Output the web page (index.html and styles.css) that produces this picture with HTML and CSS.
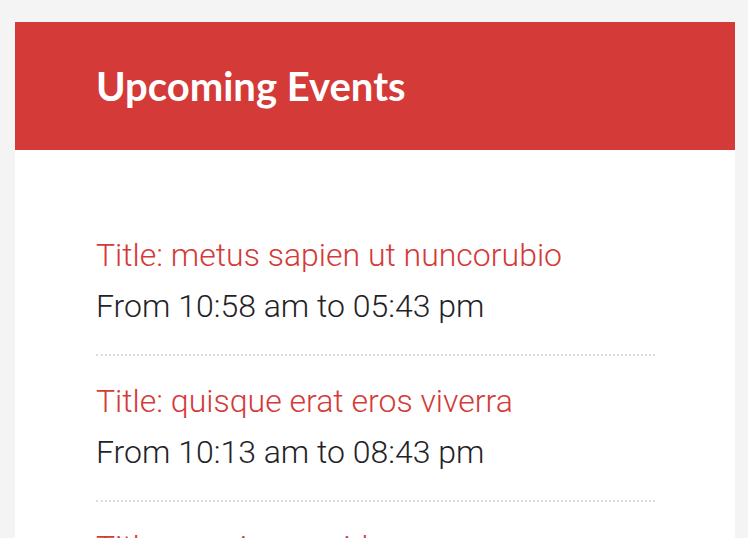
FILE: index.html
```html
<!DOCTYPE html>
<html>
<head>
<meta charset="utf-8">
<link rel="stylesheet" href="styles.css">
</head>
<body>
<div class="page">
  <div class="card">
    <div class="card-header">
      <h2 class="card-title">Upcoming Events</h2>
    </div>
    <ul class="events">
      <li class="event">
        <div class="event-title">Title: metus sapien ut nuncorubio</div>
        <div class="event-time">From 10:58 am to 05:43 pm</div>
      </li>
      <li class="event">
        <div class="event-title">Title: quisque erat eros viverra</div>
        <div class="event-time">From 10:13 am to 08:43 pm</div>
      </li>
      <li class="event">
        <div class="event-title">Title: sem in urna id</div>
        <div class="event-time">From 09:20 am to 04:15 pm</div>
      </li>
    </ul>
  </div>
</div>
</body>
</html>
```
FILE: styles.css
```css
html, body {
  margin: 0;
  padding: 0;
  background: #f4f4f4;
  height: 100%;
  overflow: hidden;
}
.page {
  padding: 22px 13px 0 15px;
}
.card {
  width: 720px;
  background: #ffffff;
}
.card-header {
  background: #d33a38;
  height: 128px;
  padding-left: 81px;
  display: flex;
  align-items: center;
}
.card-title {
  margin: 0;
  font-family: Lato, "Liberation Sans", sans-serif;
  font-weight: 700;
  font-size: 40px;
  color: #ffffff;
  line-height: 1;
}
.events {
  list-style: none;
  margin: 0;
  padding: 60px 80px 0 81px;
}
.event {
  padding: 20px 0 22px;
  border-bottom: 2px dotted #dcdcdc;
  font-family: Roboto, "Liberation Sans", sans-serif;
  font-weight: 300;
  font-size: 32px;
  line-height: 51px;
}
.event-title {
  color: #d33a38;
}
.event-time {
  color: #1f2328;
}
```
